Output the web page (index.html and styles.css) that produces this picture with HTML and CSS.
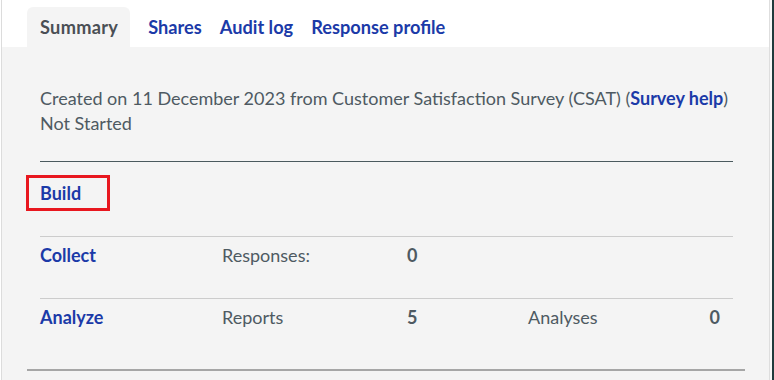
FILE: index.html
```html
<!DOCTYPE html>
<html lang="en">
<head>
<meta charset="utf-8">
<title>Survey summary</title>
<link rel="stylesheet" href="styles.css">
</head>
<body>
<div class="page">
  <div class="panel">
    <nav class="tabs">
      <span class="tab active">Summary</span>
      <a class="tab" href="#">Shares</a>
      <a class="tab" href="#">Audit log</a>
      <a class="tab" href="#">Response profile</a>
    </nav>
    <main class="body">
      <div class="content">
        <p class="meta">Created on 11 December 2023 from Customer Satisfaction Survey (CSAT) (<a class="link" href="#">Survey help</a>)<br>Not Started</p>
        <div class="build-row">
          <a class="link build" href="#">Build</a>
        </div>
        <div class="row">
          <a class="link" href="#">Collect</a>
          <span class="label">Responses:</span>
          <span class="num">0</span>
          <span></span>
          <span></span>
        </div>
        <div class="row">
          <a class="link" href="#">Analyze</a>
          <span class="label">Reports</span>
          <span class="num">5</span>
          <span class="label">Analyses</span>
          <span class="num right">0</span>
        </div>
      </div>
      <div class="bottom-line"></div>
    </main>
  </div>
  <div class="gutter"></div>
  <div class="edge"></div>
</div>
</body>
</html>
```
FILE: styles.css
```css
html, body {
  margin: 0;
  padding: 0;
  background: #ffffff;
}
body {
  font-family: Lato, "Liberation Sans", sans-serif;
  font-size: 18px;
  color: #4e5a62;
}
.page {
  display: flex;
  height: 380px;
  padding-left: 1px;
  overflow: hidden;
}
.panel {
  width: 767px;
  border-left: 1px solid #dcdcdc;
  border-right: 1px solid #dedede;
  display: flex;
  flex-direction: column;
}
.gutter {
  width: 2px;
  background: #f7f7f7;
}
.edge {
  width: 2px;
  background: #1f3b3c;
}
.tabs {
  display: flex;
  height: 40px;
  padding: 7px 0 0 25px;
  background: #ffffff;
}
.tab {
  display: block;
  padding: 0 9px;
  line-height: 40px;
  font-size: 18.2px;
  font-weight: 700;
  color: #1b3aa8;
  text-decoration: none;
}
.tab.active {
  padding: 0 12px 0 13px;
  margin-right: 9px;
  background: #f4f4f4;
  border-radius: 6px 6px 0 0;
  color: #4a4f55;
  letter-spacing: 0.3px;
}
.body {
  flex: 1;
  background: #f4f4f4;
  padding-top: 39px;
}
.content {
  margin: 0 36px 0 38px;
}
.meta {
  margin: 0;
  line-height: 25px;
  padding-bottom: 25px;
  border-bottom: 1px solid #4b5a5e;
}
.link {
  color: #1b3aa8;
  font-weight: 700;
  text-decoration: none;
}
.build-row {
  padding: 13px 0 25px;
}
.build {
  display: inline-block;
  margin-left: -14px;
  padding: 3px 26px 2px 11px;
  line-height: 25px;
  border: 3px solid #e8171f;
}
.row {
  display: grid;
  grid-template-columns: 182px 185px 121px 1fr 60px;
  border-top: 1px solid #cccccc;
  padding: 6px 0 30px;
  line-height: 25px;
}
.num {
  font-weight: 700;
}
.right {
  text-align: right;
  padding-right: 13px;
}
.bottom-line {
  margin: 9px 0 0 25px;
  width: 718px;
  height: 2px;
  background: #a6a6a6;
}
```
